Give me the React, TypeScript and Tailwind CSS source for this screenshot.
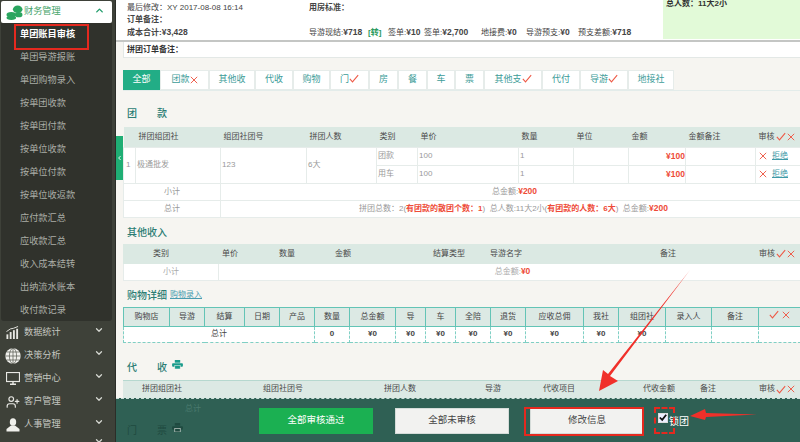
import React from "react";
import { ChevronUp, ChevronDown, ChevronLeft, UserPlus } from "lucide-react";

const Check = ({ className = "" }: { className?: string }) => (
  <svg viewBox="0 0 12 10" className={"inline-block w-[10px] h-[9px] " + className} fill="none" stroke="#ee5a47" strokeWidth="1.3">
    <path d="M1 5.5 L4.2 9 L11 1" />
  </svg>
);
const Cross = ({ className = "" }: { className?: string }) => (
  <svg viewBox="0 0 10 10" className={"inline-block w-[8px] h-[8px] " + className} fill="none" stroke="#ee5a47" strokeWidth="1.2">
    <path d="M1 1 L9 9 M9 1 L1 9" />
  </svg>
);

const Bars = () => (
  <svg viewBox="0 0 14 14" className="w-[13px] h-[13px]" fill="#e8e8e4">
    <rect x="0.5" y="9" width="2" height="5" /><rect x="4" y="6.5" width="2" height="7.5" /><rect x="7.5" y="4.5" width="2" height="9.5" /><rect x="11" y="3" width="2" height="11" />
    <path d="M0.5 6 L5 3 L8 2.5 L13 0.5" stroke="#e8e8e4" strokeWidth="1" fill="none" />
  </svg>
);
const Earth = () => (
  <svg viewBox="0 0 16 16" className="w-[16px] h-[16px]">
    <circle cx="8" cy="8" r="7.7" fill="#f0f0ec" />
    <g fill="none" stroke="#55584f" strokeWidth="0.7">
      <ellipse cx="8" cy="8" rx="3.6" ry="7.7" /><path d="M8 0.3 V15.7 M0.3 8 H15.7 M1.5 4 H14.5 M1.5 12 H14.5" />
    </g>
  </svg>
);
const Screen = () => (
  <svg viewBox="0 0 14 13" className="w-[14px] h-[13px]">
    <rect x="0.5" y="0.5" width="13" height="9" fill="#3e4139" stroke="#e8e8e4" strokeWidth="1.2" />
    <path d="M4 12.2 H10 M7 10 V12" stroke="#e8e8e4" strokeWidth="1.4" />
  </svg>
);
const Person = () => (
  <svg viewBox="0 0 14 14" className="w-[14px] h-[14px]" fill="#f0f0ec">
    <ellipse cx="7" cy="4" rx="3.2" ry="3.8" /><path d="M5 7.5 L9 7.5 L13.5 11 L13.5 13.5 L0.5 13.5 L0.5 11 Z" />
  </svg>
);
const PrintIcon = ({ fill = "#1a9c8c" }: { fill?: string }) => (
  <svg viewBox="0 0 12 10" className="w-[11px] h-[9px]" fill={fill}>
    <rect x="3" y="0" width="6" height="3" /><rect x="0" y="3.5" width="12" height="4" rx="1" /><rect x="3" y="6" width="6" height="4" stroke="#f6f5f1" strokeWidth="0.6" />
  </svg>
);

const subItems = ["单团账目审核", "单团导游报账", "单团购物录入", "按单团收款", "按单团付款", "按单位收款", "按单位付款", "按单位收返款", "应付款汇总", "应收款汇总", "收入成本结转", "出纳流水账本", "收付款记录"];
const mainItems: { label: string; icon: React.ReactNode }[] = [
  { label: "数据统计", icon: <Bars /> },
  { label: "决策分析", icon: <Earth /> },
  { label: "营销中心", icon: <Screen /> },
  { label: "客户管理", icon: <UserPlus size={14} strokeWidth={2} className="text-[#e8e8e4]" /> },
  { label: "人事管理", icon: <Person /> },
];

function Sidebar() {
  return (
    <aside className="w-[116px] h-[442px] shrink-0 bg-[#3e4139] border-r border-[#2b2d28] pl-px pr-[3px] pt-px flex flex-col overflow-hidden">
      <div className="h-[22px] shrink-0 bg-white rounded-[2px] flex items-center pl-[5px] pr-[7px]">
        <svg viewBox="0 0 16 14" className="w-[17px] h-[15px] mr-px" fill="#2aa55f">
          <ellipse cx="11" cy="4" rx="4.5" ry="3.5" />
          <ellipse cx="5" cy="9" rx="4.5" ry="2.5" />
          <ellipse cx="5" cy="12" rx="4.5" ry="2" />
          <ellipse cx="12" cy="9" rx="3.5" ry="2.5" />
        </svg>
        <span className="text-[9.2px] text-[#46a56a] flex-1">财务管理</span>
        <ChevronUp size={11} strokeWidth={3} className="text-[#1f9c6a] -mt-[4px]" />
      </div>
      <div className="h-[298px] shrink-0 bg-[#30322c] rounded-b-[3px] pl-[19px]">
        {subItems.map((s, i) => (
          <div key={s} className={"h-[23px] flex items-center text-[9.2px] " + (i === 0 ? "text-white font-bold" : "text-[#aaada6]")}>{s}</div>
        ))}
      </div>
      {mainItems.map(({ label, icon }) => (
        <div key={label} className="h-[23px] shrink-0 flex items-center text-[#c5c7c1] relative">
          <span className="w-[23px] flex justify-center">{icon}</span>
          <span className="text-[9.2px] flex-1">{label}</span>
          <ChevronDown size={10} strokeWidth={3} className="mr-[8px] -mt-[6px] text-[#d5d7d1]" />
        </div>
      ))}
      <div className="flex justify-end pr-[8px]"><ChevronDown size={10} strokeWidth={3} className="text-[#d5d7d1]" /></div>
    </aside>
  );
}

const tabs: { t: string; w: number; mark?: "x" | "c" }[] = [
  { t: "团款", w: 49, mark: "x" }, { t: "其他收", w: 46 }, { t: "代收", w: 38 }, { t: "购物", w: 37 }, { t: "门", w: 39, mark: "c" }, { t: "房", w: 29 }, { t: "餐", w: 29 }, { t: "车", w: 28 }, { t: "票", w: 29 }, { t: "其他支", w: 58, mark: "c" }, { t: "代付", w: 38 }, { t: "导游", w: 48, mark: "c" }, { t: "地接社", w: 46 },
];

const Title = ({ a, b, children }: { a: string; b?: string; children?: React.ReactNode }) => (
  <div className="flex items-center text-[10px] text-[#2b7d74] font-medium pl-[4px]">
    <span>{a}</span>
    {b && <span className="ml-[20px]">{b}</span>}
    {children}
  </div>
);

const Yen = ({ v }: { v: string }) => <b className="text-[#ee4b38] font-bold text-[8.5px]">¥{v}</b>;
const audit = (
  <span className="inline-flex items-center gap-px">审核<Check /><Cross /></span>
);

const th = "font-normal text-[#4a4a4a] text-left whitespace-nowrap overflow-hidden";
const td = "border border-[#e6ecea] text-[#999] bg-white";

function Table1() {
  const cols = [12, 85, 86, 70, 41, 101, 55, 55, 57, 70, 45];
  const heads = ["", "拼团组团社", "组团社团号", "拼团人数", "类别", "单价", "数量", "单位", "金额", "金额备注"];
  return (
    <table className="table-fixed border-collapse w-[677px] text-[8px] mt-[6px]">
      <colgroup>{cols.map((c, i) => <col key={i} style={{ width: c }} />)}</colgroup>
      <thead>
        <tr className="h-[20px] bg-[#dbe9e3]">
          {heads.map((h, i) => <th key={i} className={th + " pl-[3px]"}>{h}</th>)}
          <th className={th + " pl-[3px]"}>{audit}</th>
        </tr>
      </thead>
      <tbody>
        {["团款", "用车"].map((k, i) => (
          <tr key={k} className="h-[18px]">
            {i === 0 && <>
              <td rowSpan={2} className={td + " pl-[2px]"}>1</td>
              <td rowSpan={2} className={td + " pl-px"}>极通批发</td>
              <td rowSpan={2} className={td + " pl-px"}>123</td>
              <td rowSpan={2} className={td + " pl-px"}>6大</td>
            </>}
            <td className={td + " pl-px"}>{k}</td>
            <td className={td + " pl-px"}>100</td>
            <td className={td + " pl-px"}>1</td>
            <td className={td}></td>
            <td className={td + " text-right"}><Yen v="100" /></td>
            <td className={td}></td>
            <td className={td + " pl-[3px]"}><Cross className="mr-[5px]" /><a className="underline text-[#3f9aa8]">拒绝</a></td>
          </tr>
        ))}
        <tr className="h-[17px]">
          <td colSpan={2} className={td + " text-center"}>小计</td>
          <td colSpan={9} className={td + " text-center"}><span className="ml-[8px]">总金额:<Yen v="200" /></span></td>
        </tr>
        <tr className="h-[17px]">
          <td colSpan={2} className={td + " text-center"}>总计</td>
          <td colSpan={9} className={td + " text-right pr-[132px]"}>
            拼团总数：2(<b className="text-[#ee4b38]">有团款的散团个数：1</b>)&nbsp;&nbsp;总人数:11大2小(<b className="text-[#ee4b38]">有团款的人数：6大</b>)&nbsp;&nbsp;总金额:<Yen v="200" />
          </td>
        </tr>
      </tbody>
    </table>
  );
}

function Table2() {
  const heads: [string, number][] = [["类别", 69], ["单价", 57], ["数量", 56], ["金额", 98], ["结算类型", 57], ["导游名字", 170], ["备注", 99]];
  return (
    <div className="mt-[4px] w-[677px] text-[8px]">
      <div className="h-[20px] bg-[#dbe9e3] flex items-center text-[#4a4a4a] pl-[30px]">
        {heads.map(([h, w]) => <span key={h} className="text-left shrink-0" style={{ width: w }}>{h}</span>)}
        <span>{audit}</span>
      </div>
      <div className="h-[17px] flex bg-white border-b border-[#e6ecea] text-[#aaa]">
        <div className="w-[96px] border-x border-[#e6ecea] flex items-center justify-center">小计</div>
        <div className="flex-1 flex items-center justify-center pl-[6px]">总金额:<Yen v="0" /></div>
      </div>
    </div>
  );
}

function Table3() {
  const cols: [string, number][] = [["购物店", 46], ["导游", 35], ["结算", 40], ["日期", 35], ["产品", 35], ["数量", 35], ["总金额", 46], ["导", 30], ["车", 30], ["全陪", 35], ["退货", 35], ["应收总佣", 58], ["我社", 35], ["组团社", 47], ["录入人", 46], ["备注", 47], ["", 42]];
  const vals: string[] = ["0", "¥0", "¥0", "¥0", "¥0", "¥0", "¥0", "¥0", "¥0", "", "", ""];
  return (
    <table className="table-fixed border-collapse w-[677px] text-[8px] mt-[4px] font-bold text-[#444]">
      <colgroup>{cols.map(([h, w], i) => <col key={i} style={{ width: w }} />)}</colgroup>
      <thead>
        <tr className="h-[19px] bg-[#dce9e4]">
          {cols.map(([h], i) => (
            <th key={i} className="border border-[#63c4b6] font-normal text-[#444] text-center">{h || <span className="inline-flex items-center gap-[3px]"><Check /><Cross /></span>}</th>
          ))}
        </tr>
      </thead>
      <tbody>
        <tr className="h-[16px] bg-white">
          <td colSpan={5} className="border border-dashed border-[#7fcfc4] text-center font-normal">总计</td>
          {vals.map((v, i) => <td key={i} className="border border-dashed border-[#7fcfc4] text-center">{v}</td>)}
        </tr>
      </tbody>
    </table>
  );
}

function Table4() {
  const heads: [string, number][] = [["拼团组团社", 121], ["组团社团号", 121], ["拼团人数", 101], ["导游", 58], ["代收项目", 100], ["代收金额", 57], ["备注", 59]];
  return (
    <div className="mt-[5px] w-[677px] h-[44px] text-[8px] bg-[#dce9e4] border-t border-[#b6d8cf]">
      <div className="h-[17px] flex items-center text-[#4a4a4a] pl-[19px]">
        {heads.map(([h, w]) => <span key={h} className="shrink-0 text-left" style={{ width: w }}>{h}</span>)}
        <span>{audit}</span>
      </div>
    </div>
  );
}

function BottomBar() {
  return (
    <div className="absolute left-0 right-0 bottom-0 h-[44px] bg-[#2f6054] border-t border-dashed border-[#cfe0db] flex items-center pl-[143px] pb-[6px] pt-[6px]">
      <span className="absolute left-[69px] top-[4px] text-[8px] text-[#4a7a6e]">总计</span>
      <span className="absolute left-[11px] top-[24px] text-[10px] text-[#1f4a40]">门</span>
      <span className="absolute left-[41px] top-[24px] text-[10px] text-[#1f4a40]">票</span>
      <span className="absolute left-[56px] top-[24px]"><PrintIcon fill="#1f4a40" /></span>
      <button className="w-[114px] h-[26px] bg-[#1bb052] text-white text-[9.5px]">全部审核通过</button>
      <button className="w-[114px] h-[26px] ml-[22px] bg-[#f2f2f0] text-[#444] text-[9.5px] border border-[#d5dcd9]">全部未审核</button>
      <button className="w-[114px] h-[26px] ml-[21px] bg-[#f2f2f0] text-[#444] text-[9.5px] border border-[#d5dcd9]">修改信息</button>
      <span className="ml-[14px] -mt-[6px] w-[10px] h-[10px] bg-[#eef] border border-[#ddd] flex items-center justify-center">
        <svg viewBox="0 0 10 10" className="w-[9px] h-[9px]" fill="none" stroke="#111" strokeWidth="2.2"><path d="M1 5 L4 8 L9 1.5" /></svg>
      </span>
      <span className="ml-[1px] mt-[2px] text-[10px] text-white">锁团</span>
    </div>
  );
}

export default function App() {
  return (
    <div className="relative w-[800px] h-[442px] overflow-hidden flex bg-[#f6f5f1] font-['Liberation_Sans','Noto_Sans_CJK_SC',sans-serif]">
      <Sidebar />
      <main className="relative flex-1 h-[442px] overflow-hidden">
        <section className="bg-white h-[42px] border-b-2 border-[#c4c6c4] pl-[11px] pt-px text-[8px] text-[#444] relative">
          <div className="flex h-[13px] items-center"><span className="w-[182px]">最后修改：XY 2017-08-08 16:14</span><b>用房标准：</b></div>
          <div className="flex h-[12px] items-center font-bold">订单备注：</div>
          <div className="flex h-[13px] items-center">
            <span className="w-[182px]"><b>成本合计:<span className="text-[8.5px]">¥3,428</span></b></span>
            <span className="w-[59px]">导游现结:<b className="text-[8.5px]">¥718</b></span>
            <span className="w-[20px] text-[#2a9a60] font-bold">[转]</span>
            <span className="w-[36px]">签单:<b className="text-[8.5px]">¥10</b></span>
            <span className="w-[57px]">签单:<b className="text-[8.5px]">¥2,700</b></span>
            <span className="w-[45px]">地接费:<b className="text-[8.5px]">¥0</b></span>
            <span className="w-[52px]">导游预支:<b className="text-[8.5px]">¥0</b></span>
            <span>预支差额:<b className="text-[8.5px]">¥718</b></span>
          </div>
          <div className="absolute right-0 top-0 w-[137px] h-[39px] bg-[#e2fad8] pl-[3px] font-bold text-[#333] leading-[8px]">总人数：11大2小</div>
        </section>
        <div className="pl-[7px]">
          <div className="bg-white h-[16px] border-b border-l border-[#e3e8e6] flex items-center pl-[3px] text-[8px] font-bold text-[#333]">拼团订单备注：</div>
          <div className="flex mt-[12px] h-[21px] border-b border-[#e3ecea] w-[677px]">
            <span className="w-[37px] h-[20px] bg-[#22ad86] text-white text-[9px] flex items-center justify-center">全部</span>
            {tabs.map(t => (
              <span key={t.t} style={{ width: t.w }} className="h-[20px] bg-white border border-[#e6ecea] flex items-center justify-center text-[9px] text-[#3c9c98]">
                {t.t}{t.mark === "x" && <Cross />}{t.mark === "c" && <Check className="-mt-[3px]" />}
              </span>
            ))}
          </div>
          <div className="mt-[15px]"><Title a="团" b="款" /></div>
          <Table1 />
          <div className="mt-[7px]"><Title a="其他收入" /></div>
          <Table2 />
          <div className="mt-[7px]"><Title a="购物详细"><a className="ml-[3px] text-[8px] font-normal underline text-[#4a9cb0]">购物录入</a></Title></div>
          <Table3 />
          <div className="mt-[17px]"><Title a="代" b="收"><span className="ml-[5px] -mt-[5px] flex"><PrintIcon /></span></Title></div>
          <Table4 />
        </div>
        <button className="absolute left-0 top-[136px] w-[7px] h-[44px] bg-[#1fae74] flex items-center justify-center text-white"><ChevronLeft size={8} strokeWidth={3} /></button>
        <BottomBar />
      </main>
      <div className="absolute left-[14px] top-[24px] w-[75px] h-[26px] border-2 border-[#e5291f]" />
      <div className="absolute left-[524px] top-[407px] w-[120px] h-[29px] border-2 border-[#e5291f]" />
      <div className="absolute left-[654px] top-[407px] w-[21px] h-[27px] border-2 border-dashed border-[#e5291f]" />
      <svg className="absolute left-0 top-0 w-[800px] h-[442px] pointer-events-none" viewBox="0 0 800 442">
        <path d="M690 270 L610 376 L618 381 L599 391 L603 370 L608 374 Z" fill="#f0302a" />
        <path d="M757 414.5 L706 413 L705 409 L690 416 L705 420 L706 417 Z" fill="#f0302a" />
      </svg>
    </div>
  );
}
